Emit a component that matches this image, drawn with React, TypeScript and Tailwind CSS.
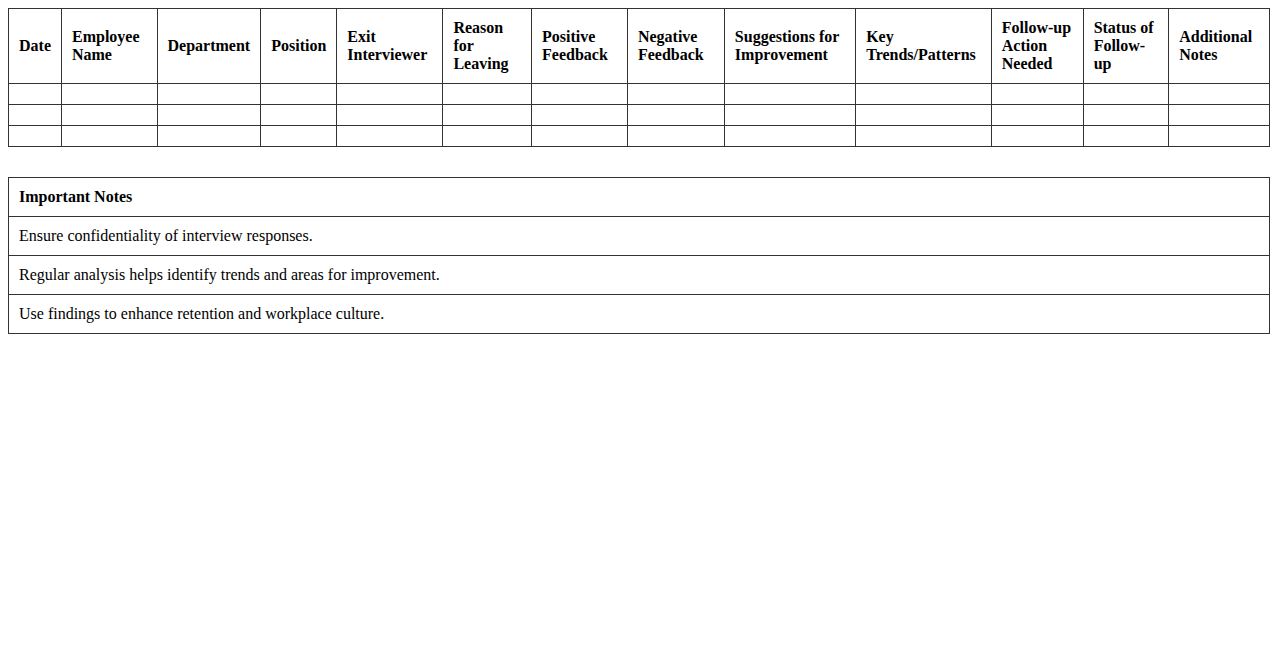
import React from "react";

const headers = [
  "Date",
  "Employee Name",
  "Department",
  "Position",
  "Exit Interviewer",
  "Reason for Leaving",
  "Positive Feedback",
  "Negative Feedback",
  "Suggestions for Improvement",
  "Key Trends/Patterns",
  "Follow-up Action Needed",
  "Status of Follow-up",
  "Additional Notes",
];

const notes = [
  "Ensure confidentiality of interview responses.",
  "Regular analysis helps identify trends and areas for improvement.",
  "Use findings to enhance retention and workplace culture.",
];

export default function App() {
  return (
    <div className="bg-white text-black p-2 text-[16px] leading-[18px] font-['Liberation_Serif','Times_New_Roman',serif]">
      <table className="w-full border-collapse mb-[30px]">
        <thead>
          <tr>
            {headers.map((h) => (
              <th key={h} className="border border-[#333] p-[10px] text-left align-middle font-bold">
                {h}
              </th>
            ))}
          </tr>
        </thead>
        <tbody>
          {[0, 1, 2].map((r) => (
            <tr key={r}>
              {headers.map((h) => (
                <td key={h} className="border border-[#333] p-[10px]"></td>
              ))}
            </tr>
          ))}
        </tbody>
      </table>
      <table className="w-full border-collapse">
        <tbody>
          <tr>
            <th className="border border-[#333] p-[10px] text-left font-bold">Important Notes</th>
          </tr>
          {notes.map((n) => (
            <tr key={n}>
              <td className="border border-[#333] p-[10px]">{n}</td>
            </tr>
          ))}
        </tbody>
      </table>
    </div>
  );
}
